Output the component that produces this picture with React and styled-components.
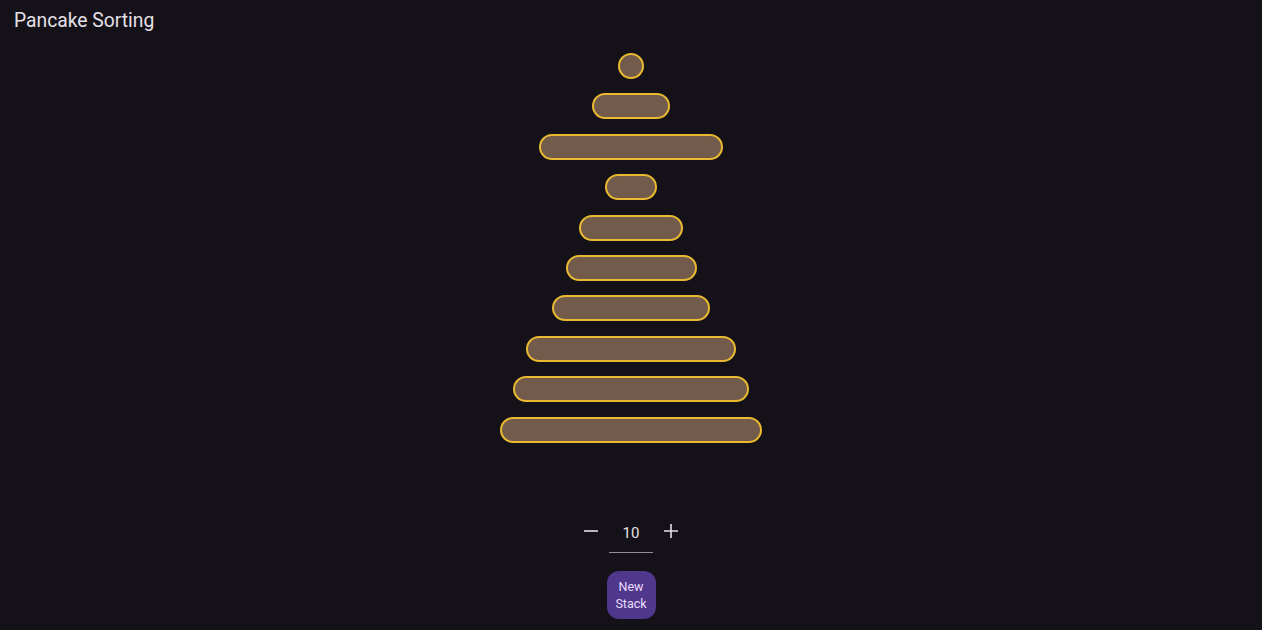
import React, { useState } from "react";
import styled, { createGlobalStyle } from "styled-components";

const Global = createGlobalStyle`
  html, body { margin: 0; padding: 0; background: #141218; }
  body { font-family: Roboto, "Noto Sans", sans-serif; color: #e6e0e9; }
`;

const Page = styled.div`
  width: 1262px;
  height: 630px;
  display: flex;
  flex-direction: column;
  background: #141218;
  overflow: hidden;
`;

const Title = styled.h1`
  margin: 0;
  padding: 9px 14px 0;
  height: 44px;
  box-sizing: border-box;
  font-size: 19.3px;
  font-weight: 400;
  color: #e6e0e9;
  letter-spacing: 0;
`;

const Stack = styled.div`
  display: flex;
  flex-direction: column;
  align-items: center;
  gap: 14.4px;
  padding-top: 9px;
  height: 465px;
  box-sizing: border-box;
`;

const Pancake = styled.div`
  height: 26px;
  box-sizing: border-box;
  border: 2px solid #e8b931;
  background: #735b4c;
  border-radius: 13px;
  flex-shrink: 0;
`;

const Controls = styled.div`
  display: flex;
  flex-direction: column;
  align-items: center;
`;

const Counter = styled.div`
  display: flex;
  align-items: center;
`;

const IconBtn = styled.button`
  width: 36px;
  height: 40px;
  background: none;
  border: none;
  color: #e6e0e9;
  display: flex;
  align-items: center;
  justify-content: center;
  padding: 0;
  cursor: pointer;
`;

const Value = styled.div`
  width: 44px;
  height: 42px;
  box-sizing: border-box;
  border-bottom: 1px solid #938f99;
  display: flex;
  align-items: center;
  justify-content: center;
  font-size: 15px;
  color: #e6e0e9;
  padding-top: 2px;
  margin-top: 2px;
`;

const NewButton = styled.button`
  margin-top: 18px;
  width: 49px;
  height: 48px;
  border: none;
  border-radius: 12px;
  background: #4f378b;
  color: #eaddff;
  font-family: Roboto, sans-serif;
  font-size: 12.5px;
  line-height: 17px;
  padding: 0;
  cursor: pointer;
`;

const sizes = [1, 3, 7, 2, 4, 5, 6, 8, 9, 10];

export default function App() {
  const [count, setCount] = useState(10);
  return (
    <Page>
      <Global />
      <Title>Pancake Sorting</Title>
      <Stack>
        {sizes.map((s, i) => (
          <Pancake key={i} style={{ width: `${s * 26.2}px` }} />
        ))}
      </Stack>
      <Controls>
        <Counter>
          <IconBtn onClick={() => setCount((c) => Math.max(1, c - 1))} aria-label="decrease">
            <svg width="14" height="14" viewBox="0 0 14 14">
              <path d="M0 7H14" stroke="#e6e0e9" strokeWidth="1.6" />
            </svg>
          </IconBtn>
          <Value>{count}</Value>
          <IconBtn onClick={() => setCount((c) => c + 1)} aria-label="increase">
            <svg width="14" height="14" viewBox="0 0 14 14">
              <path d="M0 7H14M7 0V14" stroke="#e6e0e9" strokeWidth="1.6" />
            </svg>
          </IconBtn>
        </Counter>
        <NewButton>
          New
          <br />
          Stack
        </NewButton>
      </Controls>
    </Page>
  );
}
